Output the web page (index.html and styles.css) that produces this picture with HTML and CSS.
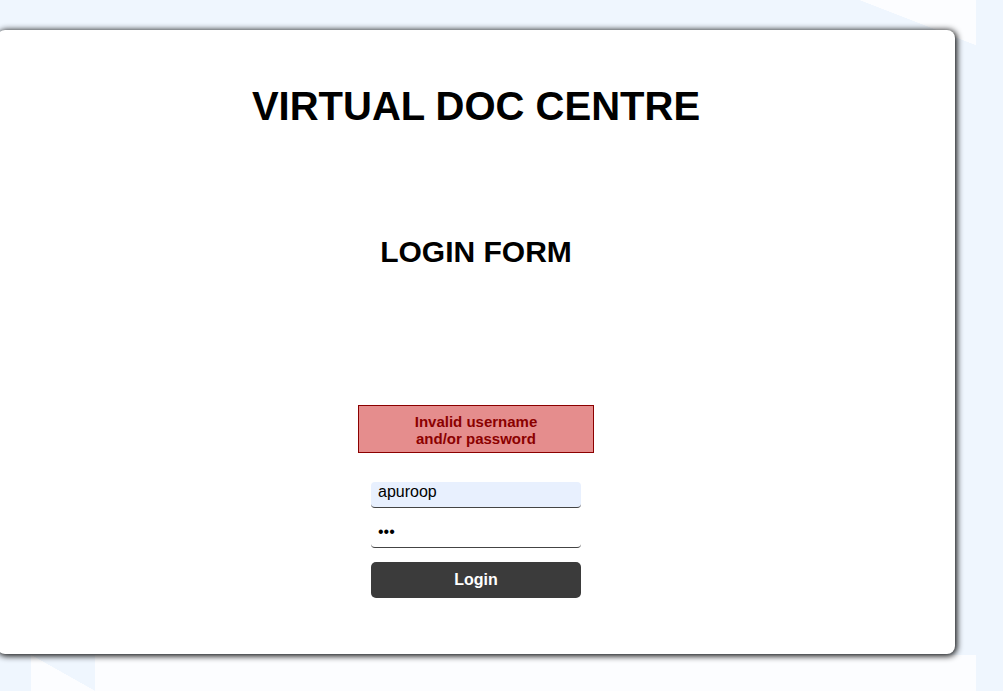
FILE: index.html
```html
<!DOCTYPE html>
<html lang="en">
<head>
<meta charset="utf-8">
<title>Virtual Doc Centre - Login</title>
<link rel="stylesheet" href="styles.css">
</head>
<body>
<div class="page">
  <main class="card">
    <h1 class="title">VIRTUAL DOC CENTRE</h1>
    <h2 class="subtitle">LOGIN FORM</h2>
    <form class="login">
      <div class="error">Invalid username and/or password</div>
      <input class="field field-filled" type="text" name="username" value="apuroop">
      <input class="field" type="password" name="password" value="abc">
      <button class="btn" type="button">Login</button>
    </form>
  </main>
</div>
</body>
</html>
```

FILE: styles.css
```css
html, body {
  margin: 0;
  padding: 0;
}
body {
  background: #eff6fe;
  font-family: "Liberation Sans", Arial, sans-serif;
  overflow: hidden;
}
.page {
  width: 976px;
  height: 691px;
  overflow: hidden;
  background-color: #eff6fe;
  background-image:
    linear-gradient(to bottom left, #fcfdff 50%, rgba(252,253,255,0) 50.5%),
    linear-gradient(to top right, #fcfdff 50%, rgba(252,253,255,0) 50.5%),
    linear-gradient(#fcfdff, #fcfdff);
  background-repeat: no-repeat;
  background-position: 860px 0, 31px 655px, 95px 655px;
  background-size: 116px 45px, 64px 36px, 881px 36px;
  padding-top: 30px;
  box-sizing: border-box;
}
.card {
  display: flex;
  flex-direction: column;
  align-items: center;
  width: 958px;
  height: 624px;
  margin-left: -3px;
  box-sizing: border-box;
  background: #fff;
  border-radius: 8px;
  box-shadow: 1px 1px 6px 1px rgba(0, 0, 0, 0.95);
  padding-top: 53px;
}
.title {
  margin: 0;
  font-size: 40px;
  font-weight: bold;
  line-height: 46px;
  color: #000;
}
.subtitle {
  margin: 106px 0 0;
  font-size: 30px;
  font-weight: bold;
  line-height: 34px;
  color: #000;
}
.login {
  display: flex;
  flex-direction: column;
  align-items: center;
  margin-top: 136px;
}
.error {
  width: 236px;
  box-sizing: border-box;
  padding: 7px 40px 5px;
  background: #e58d8d;
  border: 1px solid #8b0000;
  color: #8b0000;
  font-size: 15px;
  font-weight: bold;
  line-height: 17px;
  text-align: center;
  margin-bottom: 29px;
}
.field {
  width: 210px;
  box-sizing: border-box;
  margin: 0 0 14px;
  padding: 1px 7px 6px;
  border: none;
  border-bottom: 1px solid #444;
  border-radius: 4px;
  background: #fff;
  font-family: "Liberation Sans", Arial, sans-serif;
  font-size: 16px;
  line-height: 18px;
  color: #000;
  outline: none;
}
.field-filled {
  background: #e8f0fe;
}
.btn {
  width: 210px;
  height: 36px;
  border: none;
  border-radius: 5px;
  background: #3b3b3b;
  color: #fff;
  font-family: "Liberation Sans", Arial, sans-serif;
  font-size: 16px;
  font-weight: bold;
  padding: 0;
}
```
